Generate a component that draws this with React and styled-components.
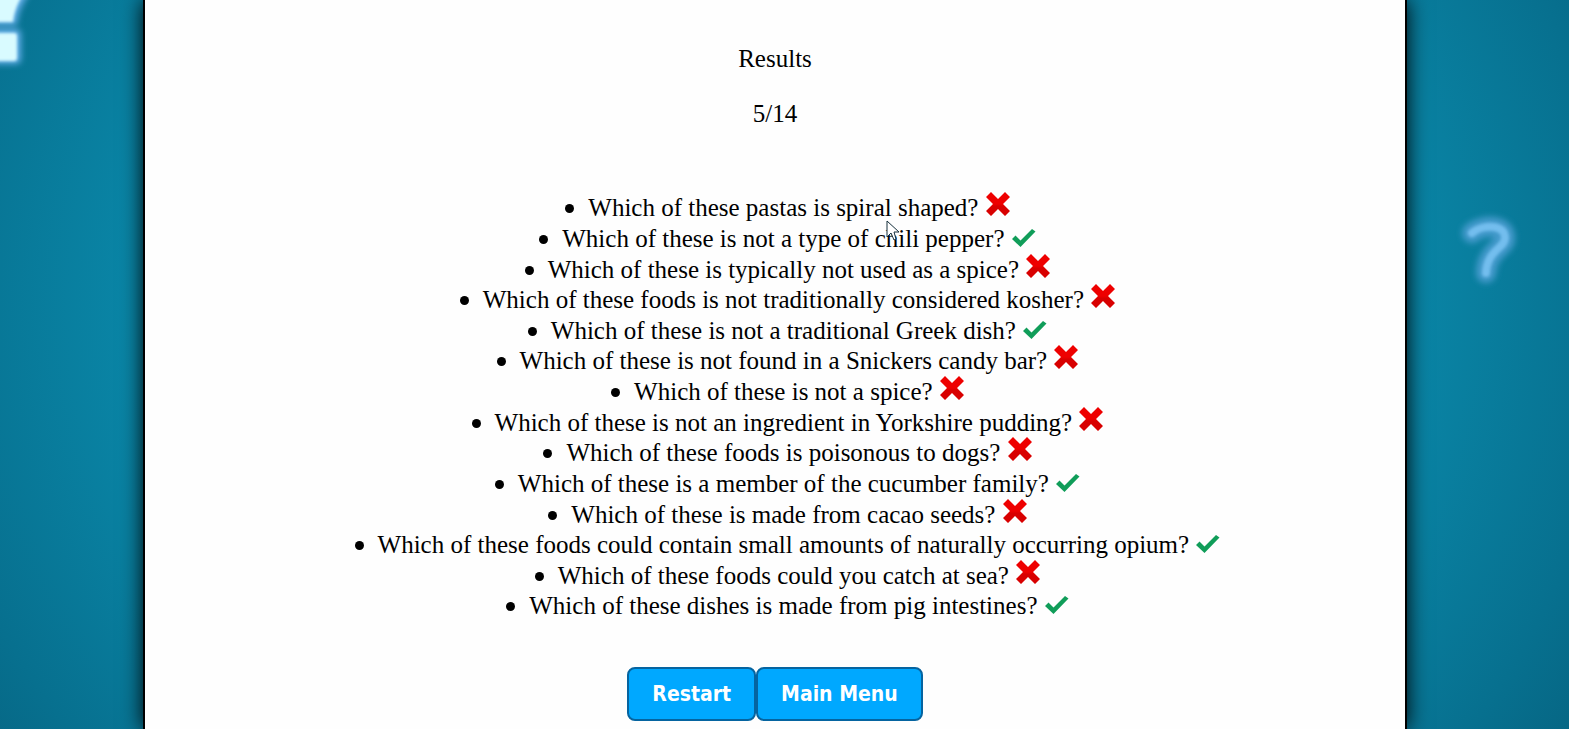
import React from "react";
import styled, { createGlobalStyle } from "styled-components";

const GlobalStyle = createGlobalStyle`
  *, *::before, *::after { box-sizing: border-box; }
  body { margin: 0; background: #066a89; }
`;

const Page = styled.div`
  position: relative;
  display: flex;
  justify-content: center;
  min-height: 100vh;
  padding: 0 162px 0 143px;
  overflow: hidden;
  background: radial-gradient(ellipse 66% 125% at 49% 42%, #0b8fb0 0%, #0a87a8 60%, #07708f 82%, #055c78 100%);
`;

const Panel = styled.main`
  position: relative;
  display: flex;
  flex-direction: column;
  align-items: center;
  width: 100%;
  padding: 44px 0 8px;
  background: #fefefe;
  border: solid #000;
  border-width: 0 2px;
  box-shadow: 0 0 20px #000;
  color: #000;
  font-family: "Liberation Serif", "Times New Roman", serif;
  font-size: 25px;
  line-height: 1.225;
`;

const Title = styled.h1`
  margin: 0;
  font-size: inherit;
  font-weight: 400;
`;

const Score = styled.p`
  margin: 24px 0 64px;
`;

const QuestionList = styled.ul`
  align-self: stretch;
  margin: 0;
  padding: 0 0 0 25px;
  list-style: none;
  text-align: center;
`;

const Question = styled.li`
  position: relative;

  &::before {
    content: "";
    display: inline-block;
    width: 9px;
    height: 9px;
    margin-right: 14px;
    border-radius: 50%;
    background: #000;
    vertical-align: 3px;
  }
`;

const Mark = styled.svg`
  width: 24px;
  height: 24px;
  margin: -4px 0 0 1px;
  vertical-align: ${(p) => (p.$raised ? "0" : "-3px")};
`;

const Actions = styled.div`
  display: flex;
  margin-top: 45px;
`;

const ActionButton = styled.button`
  height: 54px;
  padding: 0 23px;
  border: 2px solid #0564a0;
  border-radius: 8px;
  background: #00a8ff;
  color: #fff;
  font: 700 21px/24px "DejaVu Sans Condensed", "Noto Sans", sans-serif;
  cursor: pointer;
`;

const Decoration = styled.svg`
  position: absolute;
  top: ${(p) => p.$top};
  left: ${(p) => p.$left};
  right: ${(p) => p.$right};
  width: 80px;
  height: 90px;
  pointer-events: none;
`;

const Pointer = styled.svg`
  position: absolute;
  top: -4px;
  left: 50%;
  width: 14px;
  height: 22px;
  margin-left: 98px;
  pointer-events: none;
`;

const questions = [
  ["Which of these pastas is spiral shaped?", false],
  ["Which of these is not a type of chili pepper?", true],
  ["Which of these is typically not used as a spice?", false],
  ["Which of these foods is not traditionally considered kosher?", false],
  ["Which of these is not a traditional Greek dish?", true],
  ["Which of these is not found in a Snickers candy bar?", false],
  ["Which of these is not a spice?", false],
  ["Which of these is not an ingredient in Yorkshire pudding?", false],
  ["Which of these foods is poisonous to dogs?", false],
  ["Which of these is a member of the cucumber family?", true],
  ["Which of these is made from cacao seeds?", false],
  ["Which of these foods could contain small amounts of naturally occurring opium?", true],
  ["Which of these foods could you catch at sea?", false],
  ["Which of these dishes is made from pig intestines?", true],
];

function ResultMark({ correct }) {
  return correct ? (
    <Mark viewBox="0 0 24 24" role="img" aria-label="Correct">
      <path d="M0 13l3.500-3.500 5 5L20 3l3.500 2.500L8.500 21z" fill="#109d59" />
    </Mark>
  ) : (
    <Mark $raised viewBox="0 0 24 24" role="img" aria-label="Incorrect">
      <defs>
        <linearGradient id="crossRed" x1="0" y1="0" x2="0" y2="1">
          <stop offset="0.5" stopColor="#ee0000" />
          <stop offset="0.6" stopColor="#d80000" />
        </linearGradient>
      </defs>
      <path d="M5 0l7 7 7-7 5 5-7 7 7 7-5 5-7-7-7 7-5-5 7-7-7-7z" fill="url(#crossRed)" />
    </Mark>
  );
}

export default function App() {
  return (
    <>
      <GlobalStyle />
      <Page>
        <Decoration $top="-16px" $left="-20px" viewBox="0 0 80 90" aria-hidden="true">
          <defs>
            <filter id="glow" x="-50%" y="-50%" width="200%" height="200%">
              <feGaussianBlur stdDeviation="3" />
            </filter>
            <filter id="soft" x="-50%" y="-50%" width="200%" height="200%">
              <feGaussianBlur stdDeviation="1.7" />
            </filter>
          </defs>
          <g fill="#64aee8" filter="url(#glow)">
            <path d="M0 0H54C48 14 38 22 37 41H0z" />
            <rect x="0" y="45" width="41" height="35" rx="5" />
          </g>
          <g fill="#d9fbff" filter="url(#soft)">
            <path d="M0 0H48C41 14 35 22 33 38H0z" />
            <rect x="0" y="49" width="37" height="28" rx="3" />
          </g>
        </Decoration>
        <Decoration $top="205px" $right="40px" viewBox="0 0 80 90" aria-hidden="true">
          <g fill="none" strokeLinecap="round" strokeLinejoin="round">
            <path d="M23 28C32 20 56 18 56 33C56 43 38 45 37 68" stroke="#5aa5dd" strokeWidth="20" opacity="0.75" filter="url(#glow)" />
            <path d="M23 28C32 20 56 18 56 33C56 43 38 45 37 68" stroke="#7cc4f4" strokeWidth="8" opacity="0.85" filter="url(#soft)" />
          </g>
        </Decoration>
        <Panel>
          <Title>Results</Title>
          <Score>5/14</Score>
          <QuestionList>
            {questions.map(([text, correct], index) => (
              <Question key={text}>
                {text} <ResultMark correct={correct} />
                {index === 1 && (
                  <Pointer viewBox="0 0 14 22" aria-hidden="true">
                    <path d="M1 1V17L5 13L8 20L10 19L8 12H13Z" fill="#fff" stroke="#16303c" />
                  </Pointer>
                )}
              </Question>
            ))}
          </QuestionList>
          <Actions>
            <ActionButton type="button">Restart</ActionButton>
            <ActionButton type="button">Main Menu</ActionButton>
          </Actions>
        </Panel>
      </Page>
    </>
  );
}
